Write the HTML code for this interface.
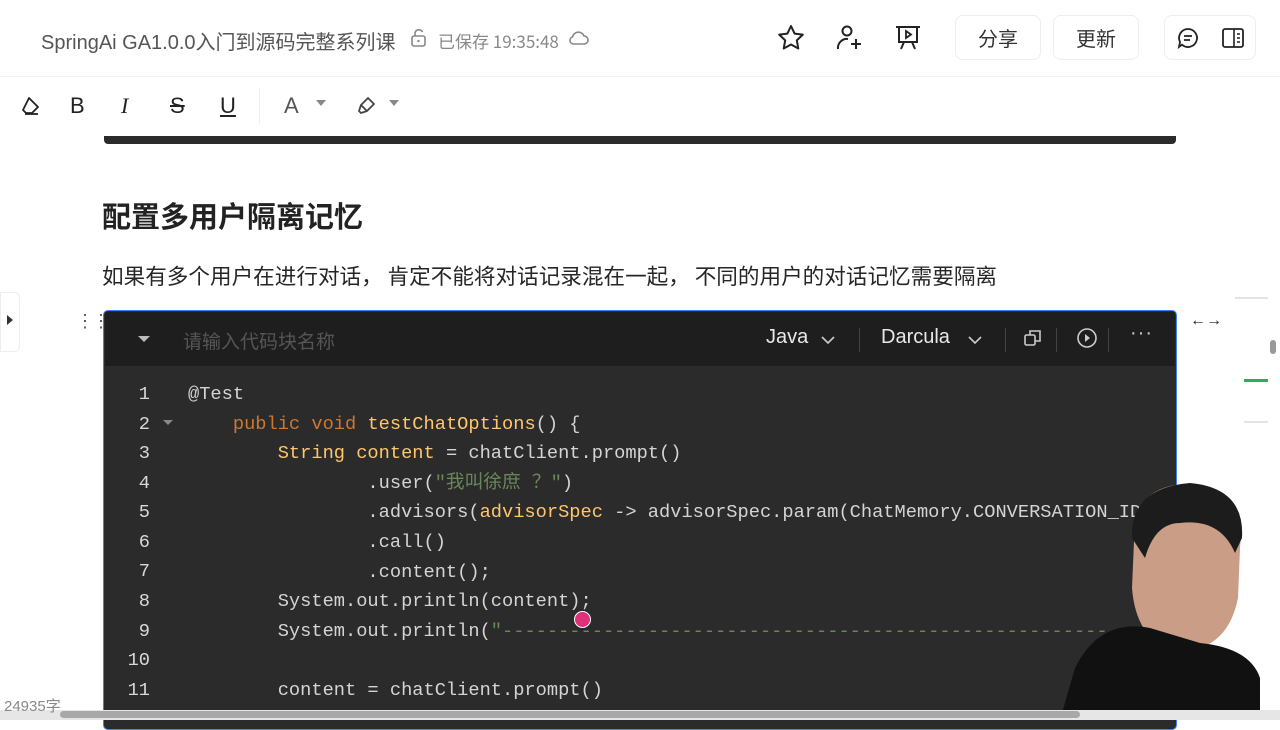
<!DOCTYPE html>
<html><head><meta charset="utf-8"><style>
*{margin:0;padding:0;box-sizing:border-box}
body{width:1280px;height:720px;overflow:hidden;background:#fff;font-family:"Liberation Sans","Noto Sans CJK SC",sans-serif;position:relative;color:#262626}
.abs{position:absolute}
.code{font-family:"Liberation Mono","Noto Sans CJK SC",monospace;font-size:18.7px;color:#d4d4d4;white-space:pre}
.ln{position:absolute;width:46px;text-align:right;left:104px;font-family:"Liberation Mono",monospace;font-size:18.7px;color:#d8d8d8}
.k{color:#cc7832}.y{color:#ffc66d}.s{color:#6a8759}
.btn{position:absolute;top:15px;height:45px;border:1px solid #eee;border-radius:8px;font-size:20px;color:#333;display:flex;align-items:center;justify-content:center;font-family:"Noto Sans CJK SC",sans-serif}
</style></head><body>
<div class="abs" style="left:41px;top:26px;font-size:20px;color:#555;font-family:'Liberation Sans','Noto Sans CJK SC',sans-serif">SpringAi GA1.0.0入门到源码完整系列课</div>
<svg class="abs" style="left:410px;top:28px" width="18" height="20"><rect x="2" y="8" width="13" height="10" rx="2" fill="none" stroke="#888" stroke-width="1.6"/><path d="M5 8V5a4 4 0 0 1 7.5-1" fill="none" stroke="#888" stroke-width="1.6"/><circle cx="8.5" cy="13" r="1.2" fill="#888"/></svg>
<div class="abs" style="left:438px;top:28px;font-size:17px;color:#888;font-family:'Noto Sans CJK SC',sans-serif">已保存 19:35:48</div>
<svg class="abs" style="left:567px;top:29px" width="22" height="18"><path d="M6 15h11a4 4 0 0 0 0-8 6 6 0 0 0-11.5 1A3.6 3.6 0 0 0 6 15z" fill="none" stroke="#888" stroke-width="1.6"/></svg>
<svg class="abs" style="left:776px;top:23px" width="30" height="30"><path d="M15 3l3.6 7.6 8.2 1-6 5.8 1.5 8.1L15 21.5l-7.3 4 1.5-8.1-6-5.8 8.2-1z" fill="none" stroke="#222" stroke-width="2" stroke-linejoin="round"/></svg>
<svg class="abs" style="left:834px;top:23px" width="30" height="30"><circle cx="13" cy="8" r="4.5" fill="none" stroke="#222" stroke-width="2"/><path d="M4 26a9 9 0 0 1 10-10M17 21h10M22 16v10" fill="none" stroke="#222" stroke-width="2"/></svg>
<svg class="abs" style="left:893px;top:23px" width="30" height="30"><path d="M3 4h24M6 4v15h18V4M11 19l-3 7M19 19l3 7" fill="none" stroke="#222" stroke-width="2"/><path d="M13 8v7l5-3.5z" fill="none" stroke="#222" stroke-width="1.8"/></svg>
<div class="btn" style="left:955px;width:86px">分享</div>
<div class="btn" style="left:1053px;width:86px">更新</div>
<div class="btn" style="left:1164px;width:92px;justify-content:space-around">
<svg width="24" height="24"><path d="M12 3a9 9 0 1 1-6 15.7L3 21l1-5A9 9 0 0 1 12 3z" fill="none" stroke="#222" stroke-width="1.8"/><path d="M8 10h8M8 14h6" stroke="#222" stroke-width="1.8"/></svg>
<svg width="24" height="24"><rect x="2" y="3" width="20" height="18" rx="2" fill="none" stroke="#222" stroke-width="1.8"/><path d="M13 3v18M16 8h3M16 12h3M16 16h3" stroke="#222" stroke-width="1.6"/></svg></div>
<div class="abs" style="left:0;top:76px;width:1280px;height:1px;background:#f2f2f2"></div>
<svg class="abs" style="left:20px;top:95px" width="22" height="22"><path d="M9 3l9 9-6 6H6l-3-3z" fill="none" stroke="#222" stroke-width="1.8" stroke-linejoin="round"/><path d="M5 19h13" stroke="#222" stroke-width="1.8"/></svg>
<div class="abs" style="left:70px;top:93px;font-size:22px;color:#222">B</div>
<div class="abs" style="left:121px;top:93px;font-size:22px;color:#222;font-style:italic;font-family:'Liberation Serif',serif">I</div>
<div class="abs" style="left:170px;top:93px;font-size:22px;color:#222;text-decoration:line-through">S</div>
<div class="abs" style="left:220px;top:93px;font-size:22px;color:#222;text-decoration:underline">U</div>
<div class="abs" style="left:259px;top:88px;width:1px;height:36px;background:#eee"></div>
<div class="abs" style="left:284px;top:93px;font-size:22px;color:#555">A</div>
<div class="abs" style="left:316px;top:100px;border:5px solid transparent;border-top:6px solid #888"></div>
<svg class="abs" style="left:355px;top:95px" width="22" height="22"><path d="M13 3l6 6-7 7-6-6z M6 10l-2 6 2 2 6-2" fill="none" stroke="#444" stroke-width="1.8" stroke-linejoin="round"/></svg>
<div class="abs" style="left:389px;top:100px;border:5px solid transparent;border-top:6px solid #888"></div>
<div class="abs" style="left:104px;top:136px;width:1072px;height:8px;background:#2b2b2b;border-radius:0 0 4px 4px"></div>
<div class="abs" style="left:102px;top:194px;font-size:29px;font-weight:bold;color:#222;font-family:'Noto Sans CJK SC',sans-serif">配置多用户隔离记忆</div>
<div class="abs" style="left:102px;top:260px;font-size:21.6px;color:#262626;font-family:'Noto Sans CJK SC',sans-serif;white-space:pre">如果有多个用户在进行对话， 肯定不能将对话记录混在一起， 不同的用户的对话记忆需要隔离</div>
<div class="abs" style="left:0;top:292px;width:20px;height:60px;background:#fff;border:1px solid #eee;border-radius:0 6px 6px 0"></div>
<div class="abs" style="left:7px;top:315px;border:5px solid transparent;border-left:6px solid #333"></div>
<div class="abs" style="left:76px;top:311px;font-size:18px;color:#555;letter-spacing:-2px">⋮⋮</div>
<div class="abs" style="left:103px;top:310px;width:1074px;height:420px;background:#2b2b2b;border:1.5px solid #3b82f6;border-radius:5px"></div>
<div class="abs" style="left:105px;top:312px;width:1070px;height:54px;background:#1e1e1e"></div>
<div class="abs" style="left:138px;top:336px;border:6px solid transparent;border-top:6px solid #bbb"></div>
<div class="abs" style="left:183px;top:327px;font-size:19px;color:#555;font-family:'Noto Sans CJK SC',sans-serif">请输入代码块名称</div>
<div class="abs" style="left:766px;top:326px;font-size:20px;color:#e8e8e8">Java</div>
<svg class="abs" style="left:820px;top:334px" width="16" height="12"><path d="M2 3l6 6 6-6" fill="none" stroke="#ccc" stroke-width="1.6"/></svg>
<div class="abs" style="left:859px;top:328px;width:1px;height:24px;background:#444"></div>
<div class="abs" style="left:881px;top:326px;font-size:20px;color:#e8e8e8">Darcula</div>
<svg class="abs" style="left:967px;top:334px" width="16" height="12"><path d="M2 3l6 6 6-6" fill="none" stroke="#ccc" stroke-width="1.6"/></svg>
<div class="abs" style="left:1005px;top:328px;width:1px;height:24px;background:#444"></div>
<svg class="abs" style="left:1023px;top:328px" width="20" height="20"><rect x="2" y="7" width="10" height="10" rx="1.5" fill="none" stroke="#ccc" stroke-width="1.6"/><path d="M7 7V3h10v10h-5" fill="none" stroke="#ccc" stroke-width="1.6"/></svg>
<div class="abs" style="left:1056px;top:328px;width:1px;height:24px;background:#444"></div>
<svg class="abs" style="left:1076px;top:327px" width="22" height="22"><circle cx="11" cy="11" r="9" fill="none" stroke="#ccc" stroke-width="1.6"/><path d="M9 7v8l5-4z" fill="#ccc"/></svg>
<div class="abs" style="left:1108px;top:328px;width:1px;height:24px;background:#444"></div>
<div class="abs" style="left:1130px;top:322px;font-size:20px;color:#ccc;letter-spacing:1px">···</div>
<div class="abs" style="left:1190px;top:312px;font-size:16px;color:#222">←→</div>
<div class="ln" style="top:383px">1</div><div class="ln" style="top:413px">2</div><div class="ln" style="top:442px">3</div><div class="ln" style="top:472px">4</div><div class="ln" style="top:501px">5</div><div class="ln" style="top:531px">6</div><div class="ln" style="top:560px">7</div><div class="ln" style="top:590px">8</div><div class="ln" style="top:620px">9</div><div class="ln" style="top:649px">10</div><div class="ln" style="top:679px">11</div>
<div class="abs" style="left:163px;top:420px;border:5px solid transparent;border-top:5px solid #888"></div>
<div class="abs code" style="left:188px;top:380px;line-height:29.6px">@Test
    <span class="k">public void</span> <span class="y">testChatOptions</span>() {
        <span class="y">String content</span> = chatClient.prompt()
                .user(<span class="s">"我叫徐庶 ？"</span>)
                .advisors(<span class="y">advisorSpec</span> -&gt; advisorSpec.param(ChatMemory.CONVERSATION_ID
                .call()
                .content();
        System.out.println(content);
        System.out.println(<span class="s">"------------------------------------------------------</span>

        content = chatClient.prompt()</div>
<div class="abs" style="left:574px;top:611px;width:17px;height:17px;border-radius:50%;background:#e0307a;border:1.5px solid #fff"></div>
<svg class="abs" style="left:1060px;top:478px" width="200" height="242"><path d="M75 40 Q90 0 140 8 Q185 20 180 70 L178 120 Q170 160 140 170 L100 168 Q75 150 72 110z" fill="#c99d86"/><path d="M72 60 Q70 10 130 5 Q185 10 182 60 L175 75 Q160 40 120 45 Q95 45 85 80z" fill="#1c1c1c"/><path d="M0 242 L15 190 Q40 140 90 150 L140 165 Q190 170 200 200 L200 242z" fill="#111"/></svg>
<div class="abs" style="left:1235px;top:297px;width:33px;height:2px;background:#e4e4e4"></div>
<div class="abs" style="left:1244px;top:379px;width:24px;height:3px;background:#22b35e"></div>
<div class="abs" style="left:1244px;top:421px;width:24px;height:2px;background:#e4e4e4"></div>
<div class="abs" style="left:1270px;top:340px;width:6px;height:14px;background:#999;border-radius:3px"></div>
<div class="abs" style="left:0;top:710px;width:1280px;height:10px;background:#e6e6e6"></div>
<div class="abs" style="left:60px;top:711px;width:1020px;height:7px;background:#a8a8a8;border-radius:4px"></div>
<div class="abs" style="left:4px;top:695px;font-size:15px;color:#888">24935字</div>
</body></html>
